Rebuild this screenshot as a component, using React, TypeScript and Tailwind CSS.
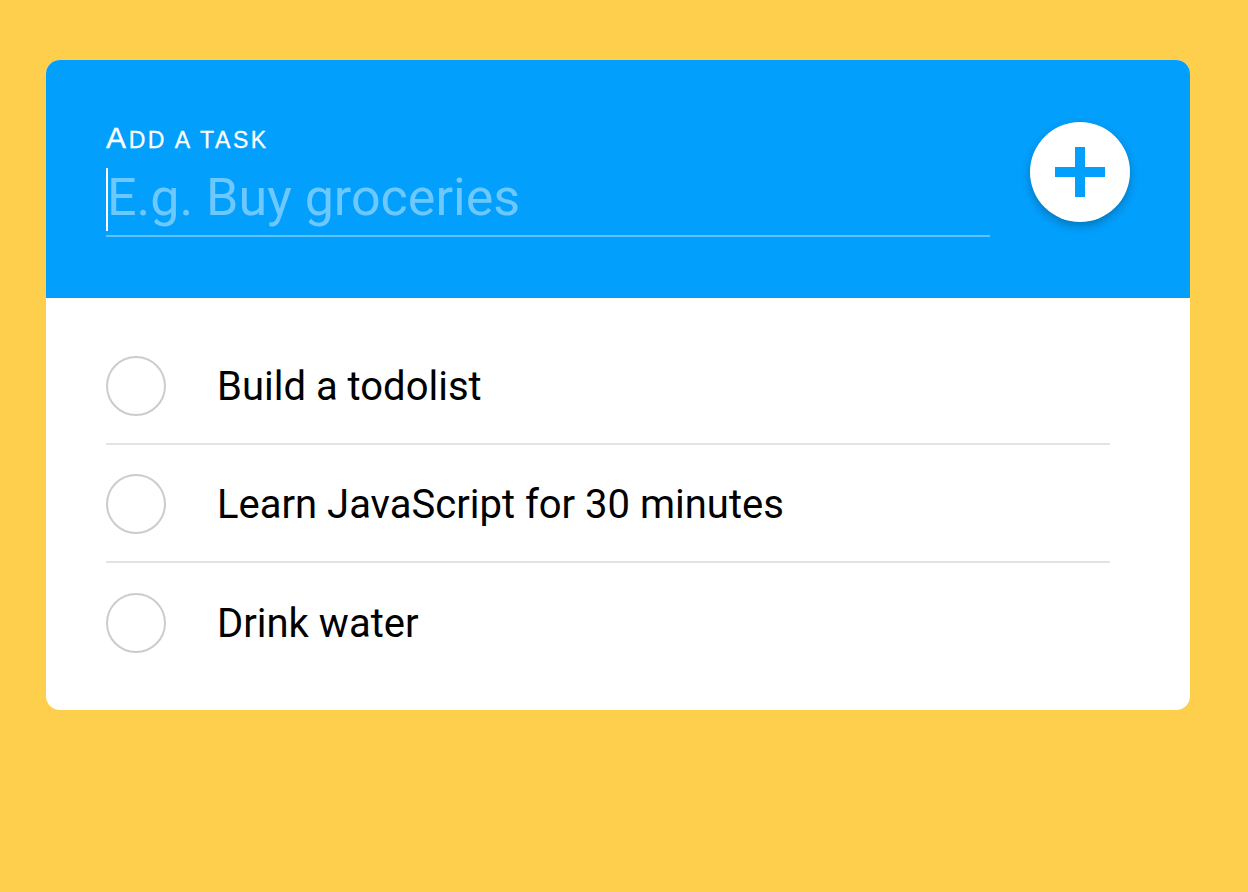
import React from "react";

const tasks = ["Build a todolist", "Learn JavaScript for 30 minutes", "Drink water"];

export default function App() {
  return (
    <div className="min-h-[892px] w-full bg-[#fdcf4d] pt-[60px] px-[46px]" style={{ fontFamily: "Roboto, 'Noto Sans', sans-serif" }}>
      <div className="w-[1144px] h-[650px] rounded-[14px] bg-white overflow-hidden">
        <div className="h-[238px] bg-[#039ffc] flex items-start pt-[60px] pl-[60px] pr-[60px] gap-[40px]">
          <div className="flex-1 flex flex-col">
            <label className="text-white h-[34px] leading-[36px] tracking-[2.6px] whitespace-nowrap [-webkit-text-stroke:0.3px_white]" style={{ fontFamily: "'Liberation Sans', Arial, sans-serif" }}>
              <span className="text-[30px]">A</span>
              <span className="text-[23px]">DD A TASK</span>
            </label>
            <div className="relative mt-[13px] border-b-2 border-[#5ec3fd] h-[70px] flex items-start">
              <span className="absolute left-0 top-[1px] w-[2px] h-[63px] bg-white" />
              <input
                className="w-full h-[61px] bg-transparent outline-none text-[52px] leading-normal text-white placeholder:text-[#6cc8fd] pl-[1px] p-0"
                placeholder="E.g. Buy groceries"
              />
            </div>
          </div>
          <button className="mt-[2px] w-[100px] h-[100px] rounded-full bg-white shadow-[0_4px_10px_rgba(0,0,0,0.25)] flex items-center justify-center shrink-0">
            <svg width="50" height="50" viewBox="0 0 50 50">
              <rect x="0" y="20" width="50" height="10" fill="#039ffc" />
              <rect x="20" y="0" width="10" height="50" fill="#039ffc" />
            </svg>
          </button>
        </div>
        <ul className="pl-[60px] pr-[80px] pt-[29px]">
          {tasks.map((t, i) => (
            <li key={t} className={`h-[118px] flex items-center gap-[51px] ${i < tasks.length - 1 ? "border-b-2 border-[#e3e3e3]" : ""}`}>
              <span className="w-[60px] h-[60px] rounded-full border-2 border-[#cccccc] shrink-0 mt-[2px]" />
              <span className="text-[40px] text-black pt-[3px]">{t}</span>
            </li>
          ))}
        </ul>
      </div>
    </div>
  );
}
